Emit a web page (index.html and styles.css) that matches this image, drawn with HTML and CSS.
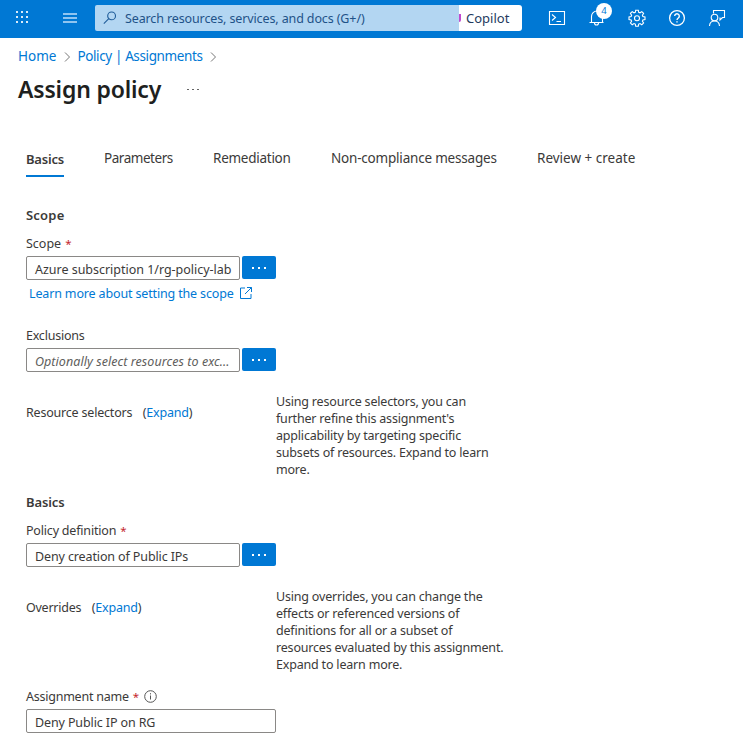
FILE: index.html
```html
<!DOCTYPE html>
<html lang="en">
<head>
<meta charset="utf-8">
<title>Assign policy</title>
<link rel="stylesheet" href="styles.css">
</head>
<body>
<header class="topbar">
  <svg class="waffle" width="12" height="12" viewBox="0 0 12 12"><path d="M0 0h2v2H0zM5 0h2v2H5zM10 0h2v2h-2zM0 5h2v2H0zM5 5h2v2H5zM10 5h2v2h-2zM0 10h2v2H0zM5 10h2v2H5zM10 10h2v2h-2z"/></svg>
  <svg class="burger" width="14" height="10" viewBox="0 0 14 10"><path d="M0 0h14v2H0zM0 4h14v2H0zM0 8h14v2H0z"/></svg>
  <div class="search">
    <svg width="14" height="14" viewBox="0 0 14 14" stroke="#1f5c99" stroke-width="1.1"><circle cx="8.6" cy="4.9" r="3.9"/><path d="M5.8 7.7L.8 12.7"/></svg>
    <span class="search-text">Search resources, services, and docs (G+/)</span>
  </div>
  <div class="copilot"><i class="sliver"></i><span>Copilot</span></div>
  <nav class="tools">
    <svg width="18" height="18" viewBox="0 0 18 18"><path d="M1.500 2.500h15v13h-15zM4 5.500l3.500 3L4 11.500M8.500 12.500H13"/></svg>
    <span class="bell"><svg width="18" height="18" viewBox="0 0 18 18"><path d="M3.500 13.500V7.500a5.500 5.500 0 0 1 11 0v6M1.500 13.500h14M6.500 14a2 2 0 0 0 4 0"/></svg><b class="badge">4</b></span>
    <svg width="18" height="18" viewBox="0 0 18 18"><path d="M7.700 1.200h2.600l.4 2.100 1.300.5 1.800-1.200 1.800 1.800-1.200 1.800.5 1.300 2.100.4v2.600l-2.100.4-.5 1.300 1.200 1.800-1.800 1.800-1.800-1.200-1.300.5-.4 2.100H7.700l-.4-2.100-1.300-.5-1.800 1.200-1.800-1.800 1.200-1.800-.5-1.300L1 10.500V7.900l2.100-.4.5-1.300-1.200-1.800 1.800-1.800L6 3.800l1.300-.5z"/><circle cx="9" cy="9.200" r="2.500"/></svg>
    <svg width="18" height="18" viewBox="0 0 18 18"><circle cx="9" cy="9" r="7.400" stroke-width="1.300"/><path stroke-width="1.400" d="M6.700 7.100a2.300 2.300 0 1 1 3.600 1.900c-.9.600-1.300 1-1.300 2M9 12.200v1.400"/></svg>
    <svg width="18" height="18" viewBox="0 0 18 18"><path d="M5.500 4.500v-3h11v7h-2l-2.500 2.500v-2.500M1.500 17c.2-3.300 2.300-5 5-5s4.800 1.700 5 5"/><circle cx="6.500" cy="8.500" r="3.300"/></svg>
  </nav>
</header>
<nav class="crumbs">
  <a>Home</a>
  <svg width="7" height="10" viewBox="0 0 7 10"><path d="M1 .5L5.500 5 1 9.500"/></svg>
  <a class="crumb-assignments">Policy | Assignments</a>
  <svg width="7" height="10" viewBox="0 0 7 10"><path d="M1 .5L5.500 5 1 9.500"/></svg>
</nav>
<div class="heading"><h1>Assign policy</h1><span class="more"><i></i><i></i><i></i></span></div>
<nav class="tabs">
  <a class="active">Basics</a>
  <a class="tab-parameters">Parameters</a>
  <a class="tab-remediation">Remediation</a>
  <a class="tab-messages">Non-compliance messages</a>
  <a>Review + create</a>
</nav>
<main class="form">
  <h2 class="first">Scope</h2>
  <div class="label"><span class="plain">Scope</span><em>*</em></div>
  <div class="field"><div class="input scope-value">Azure subscription 1/rg-policy-lab</div><div class="pick"><i></i><i></i><i></i></div></div>
  <div class="learn"><a>Learn more about setting the scope</a><svg width="12" height="12" viewBox="0 0 12 12"><path d="M5 1H.5v10.500H11V7M7 .5h4.500V5M11.500.5L5 7"/></svg></div>
  <div class="label excl">Exclusions</div>
  <div class="field"><div class="input placeholder">Optionally select resources to exc...</div><div class="pick"><i></i><i></i><i></i></div></div>
  <div class="info">
    <div class="info-label"><span>Resource selectors</span><span>(<a>Expand</a>)</span></div>
    <p>Using resource selectors, you can<br>further refine this assignment's<br>applicability by targeting specific<br>subsets of resources. Expand to learn<br>more.</p>
  </div>
  <h2 class="second">Basics</h2>
  <div class="label"><span>Policy definition</span><em>*</em></div>
  <div class="field"><div class="input">Deny creation of Public IPs</div><div class="pick"><i></i><i></i><i></i></div></div>
  <div class="info">
    <div class="info-label"><span class="overrides">Overrides</span><span>(<a>Expand</a>)</span></div>
    <p>Using overrides, you can change the<br>effects or referenced versions of<br>definitions for all or a subset of<br>resources evaluated by this assignment.<br>Expand to learn more.</p>
  </div>
  <div class="label name"><span>Assignment name</span><em>*</em><svg width="13" height="13" viewBox="0 0 13 13"><circle cx="6.500" cy="6.500" r="5.800"/><path d="M6.500 5.500v4M6.500 3.200v1.200"/></svg></div>
  <div class="input wide">Deny Public IP on RG</div>
</main>
</body>
</html>
```
FILE: styles.css
```css
* { box-sizing: border-box; }
body { margin: 0; background: #fff; color: #3b3a39; font: 12.5px/17px "Noto Sans", "Open Sans", sans-serif; white-space: nowrap; width: 743px; height: 755px; overflow: hidden; }
svg { flex: none; display: block; fill: none; }
a { color: #0078d4; }

.topbar { height: 38px; background: #0078d4; display: flex; align-items: flex-start; }
.waffle { margin: 11px 0 0 16px; fill: #d9ebf9; }
.burger { margin: 13px 0 0 35px; fill: #8fc4f0; }
.search { margin: 5px 0 0 18px; width: 364px; height: 26px; background: #b3d6f2; border-radius: 2px 0 0 2px; display: flex; align-items: center; padding-left: 8px; }
.search-text { margin-left: 8px; color: #1f5288; letter-spacing: -.12px; }
.copilot { margin-top: 5px; width: 63px; height: 26px; background: #fff; border-radius: 0 3px 3px 0; display: flex; align-items: center; color: #243a5e; font-size: 13px; }
.sliver { width: 2px; height: 8px; background: #c04bd0; border-radius: 0 0 2px 0; margin-right: 5px; }
.tools { display: flex; gap: 22px; margin: 9px 0 0 26px; }
.tools svg { stroke: #fff; stroke-width: 1.1; }
.bell { position: relative; }
.badge { position: absolute; left: 8px; top: -6px; width: 16px; height: 16px; border-radius: 50%; background: #fff; color: #0078d4; font-size: 9.5px; line-height: 16px; font-weight: 400; text-align: center; }

.crumbs { display: flex; align-items: center; height: 20px; margin: 8px 0 0 18px; font-size: 13.5px; }
.crumbs svg { stroke: #777; margin: 1px 6.5px 0 7.5px; }
.crumb-assignments { letter-spacing: -.38px; }
.heading { display: flex; height: 34px; margin: 6px 0 0 18px; }
h1 { margin: 0; width: 143px; font-size: 23px; line-height: 34px; font-weight: 600; color: #201f1e; letter-spacing: -.18px; }
.more { display: flex; gap: 3px; margin: 17px 0 0 26px; }
.more i { width: 2px; height: 1px; background: #666; }

.tabs { display: flex; margin: 42px 0 0 26px; height: 29px; font-size: 13.5px; line-height: 20px; gap: 40px; }
.tabs a { color: #3b3a39; }
.tabs .active { width: 38px; font-weight: 600; border-bottom: 2px solid #0078d4; font-size: 13px; line-height: 22px; letter-spacing: -.2px; }
.tab-parameters { width: 69px; letter-spacing: -.46px; }
.tab-remediation { width: 78px; letter-spacing: -.26px; }
.tab-messages { width: 166px; letter-spacing: -.2px; }

.form { margin-left: 26px; letter-spacing: -.19px; }
h2 { margin: 28px 0 0; font-size: 13px; line-height: 20px; font-weight: 600; letter-spacing: -.1px; }
.first { letter-spacing: .2px; }
.label { display: flex; margin-top: 10px; height: 17px; }
.plain { letter-spacing: 0; }
.label em { font-style: normal; font-size: 11.5px; color: #c4262e; margin-left: 4px; }
.label svg { stroke: #555; margin: 2px 0 0 5px; }
.field { display: flex; gap: 2px; margin-top: 4px; height: 24px; }
.input { width: 214px; height: 24px; border: 1px solid #8a8886; border-radius: 2px; padding: 4px 0 0 8px; letter-spacing: -.12px; }
.scope-value { letter-spacing: -.02px; }
.placeholder { font-style: italic; color: #605e5c; letter-spacing: .06px; }
.pick { width: 34px; height: 23px; border-radius: 2px; background: #0078d4; display: flex; gap: 4px; justify-content: center; padding-top: 11px; }
.pick i { width: 2px; height: 2px; background: #fff; }
.learn { display: flex; gap: 6px; margin: 5px 0 0 3px; height: 17px; letter-spacing: -.15px; }
.learn svg { stroke: #0078d4; margin-top: 2px; }
.excl { margin-top: 25px; letter-spacing: -.22px; }
.info { display: flex; margin-top: 21px; height: 85px; }
.info-label { width: 250px; padding-top: 11px; display: flex; gap: 10.5px; letter-spacing: -.2px; }
.overrides { letter-spacing: -.25px; }
.info p { margin: 0; }
.second { margin-top: 14px; }
.name { margin-top: 15px; letter-spacing: -.24px; }
.wide { width: 250px; margin-top: 4px; }
```
